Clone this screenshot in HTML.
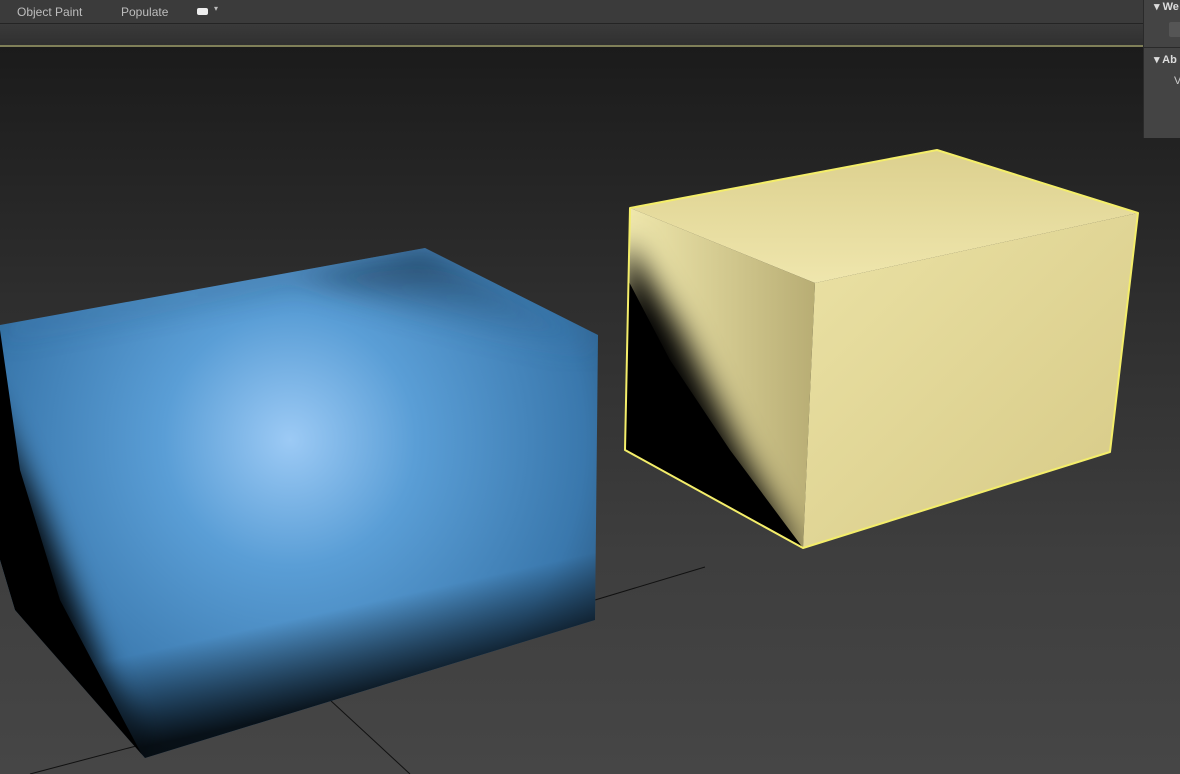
<!DOCTYPE html>
<html><head><style>
body{margin:0;width:1180px;height:774px;overflow:hidden;background:#2a2a2a;font-family:"Liberation Sans",sans-serif;position:relative}
.vp{position:absolute;left:0;top:47px;width:1180px;height:727px;background:linear-gradient(#1b1b1b,#2e2e2e 35%,#3e3e3e 70%,#464646)}
.t1{position:absolute;left:0;top:0;width:1180px;height:23px;background:#3b3b3b;border-bottom:1px solid #242424}
.t2{position:absolute;left:0;top:24px;width:1180px;height:21px;background:linear-gradient(#3a3a3a,#303030)}
.yl{position:absolute;left:0;top:45px;width:1180px;height:2px;background:#7f7f58}
.t1 span{position:absolute;top:5px;font-size:12px;color:#bdbdbd}
.rp{position:absolute;left:1143px;top:0;width:37px;height:138px;background:#444;border-left:1px solid #2a2a2a}
</style></head><body>
<div class="vp"></div>
<div class="t1"><span style="left:17px">Object Paint</span><span style="left:121px">Populate</span>
<span style="left:197px;top:8px;width:11px;height:7px;background:#eee;border-radius:2px"></span><span style="left:214px;top:4px;font-size:8px">▾</span></div>
<div class="t2"></div><div class="yl"></div>
<svg width="1180" height="774" style="position:absolute;left:0;top:0">
<defs>
<radialGradient id="bl" cx="290" cy="440" r="420" gradientUnits="userSpaceOnUse">
<stop offset="0" stop-color="#9ccaf5"/><stop offset="0.3" stop-color="#5a9ed6"/><stop offset="0.7" stop-color="#3a78ad"/><stop offset="1" stop-color="#1d3d5a"/></radialGradient>
<linearGradient id="bt" x1="0" y1="0" x2="0" y2="1"><stop offset="0" stop-color="#0c1a28"/><stop offset="1" stop-color="#3c7ab2" stop-opacity="0"/></linearGradient>
<linearGradient id="bb" gradientUnits="userSpaceOnUse" x1="380" y1="600" x2="400" y2="690"><stop offset="0" stop-color="#000" stop-opacity="0"/><stop offset="1" stop-color="#000" stop-opacity="0.85"/></linearGradient>
<linearGradient id="yf" x1="0" y1="0" x2="1" y2="1"><stop offset="0" stop-color="#ebe2a5"/><stop offset="1" stop-color="#d6c986"/></linearGradient>
<linearGradient id="yt" x1="0" y1="0" x2="0" y2="1"><stop offset="0" stop-color="#dcd08e"/><stop offset="1" stop-color="#efe6ad"/></linearGradient>
<linearGradient id="yl" x1="0" y1="0" x2="1" y2="0"><stop offset="0" stop-color="#f0e8ad"/><stop offset="1" stop-color="#b8ad74"/></linearGradient>
<filter id="bf"><feGaussianBlur stdDeviation="14"/></filter>
<clipPath id="bc"><polygon points="0,325 425,248 598,335 595,620 145,758 15,610 0,560"/></clipPath>
<clipPath id="yc"><polygon points="630,208 815,283 803,548 625,450"/></clipPath>
</defs>
<g stroke="#111" stroke-width="1">
<line x1="595" y1="600" x2="705" y2="567"/><line x1="330" y1="700" x2="410" y2="774"/><line x1="30" y1="774" x2="140" y2="745"/>
</g>
<polygon points="0,325 425,248 598,335 595,620 145,758 15,610 0,560" fill="url(#bl)"/>
<g clip-path="url(#bc)">
<polygon points="0,325 425,248 598,335 595,360 300,280 0,340" fill="url(#bt)" opacity="0.7" filter="url(#bf)"/>
<polygon points="598,520 598,640 145,780 -50,800 -50,700" fill="url(#bb)"/>
<polygon points="-20,380 15,610 150,770 110,690 40,510" fill="#000" filter="url(#bf)"/>
<polygon points="0,330 0,560 15,610 150,770 60,600 20,470" fill="#000"/>
</g>
<polygon points="630,208 937,150 1138,213 815,283" fill="url(#yt)"/>
<polygon points="815,283 1138,213 1110,452 803,548" fill="url(#yf)"/>
<polygon points="630,208 815,283 803,548 625,450" fill="url(#yl)"/>
<g clip-path="url(#yc)">
<polygon points="625,240 615,460 803,560 740,450 680,330" fill="#000" filter="url(#bf)"/>
<polygon points="628,280 625,450 803,548 730,450 670,360" fill="#000"/>
</g>
<polygon points="630,208 937,150 1138,213 1110,452 803,548 625,450" fill="none" stroke="#f4ee6a" stroke-width="2" stroke-linejoin="round"/>
</svg>
<div class="rp"><div style="position:absolute;left:10px;top:0;color:#ddd;font-size:11px;font-weight:bold">▾ We</div>
<div style="position:absolute;left:25px;top:22px;width:14px;height:15px;background:#555;border-radius:2px"></div>
<div style="position:absolute;left:0;top:47px;width:37px;height:1px;background:#2a2a2a"></div>
<div style="position:absolute;left:10px;top:53px;color:#ddd;font-size:11px;font-weight:bold">▾ Ab</div>
<div style="position:absolute;left:30px;top:75px;color:#ccc;font-size:11px">V</div></div>
</body></html>
